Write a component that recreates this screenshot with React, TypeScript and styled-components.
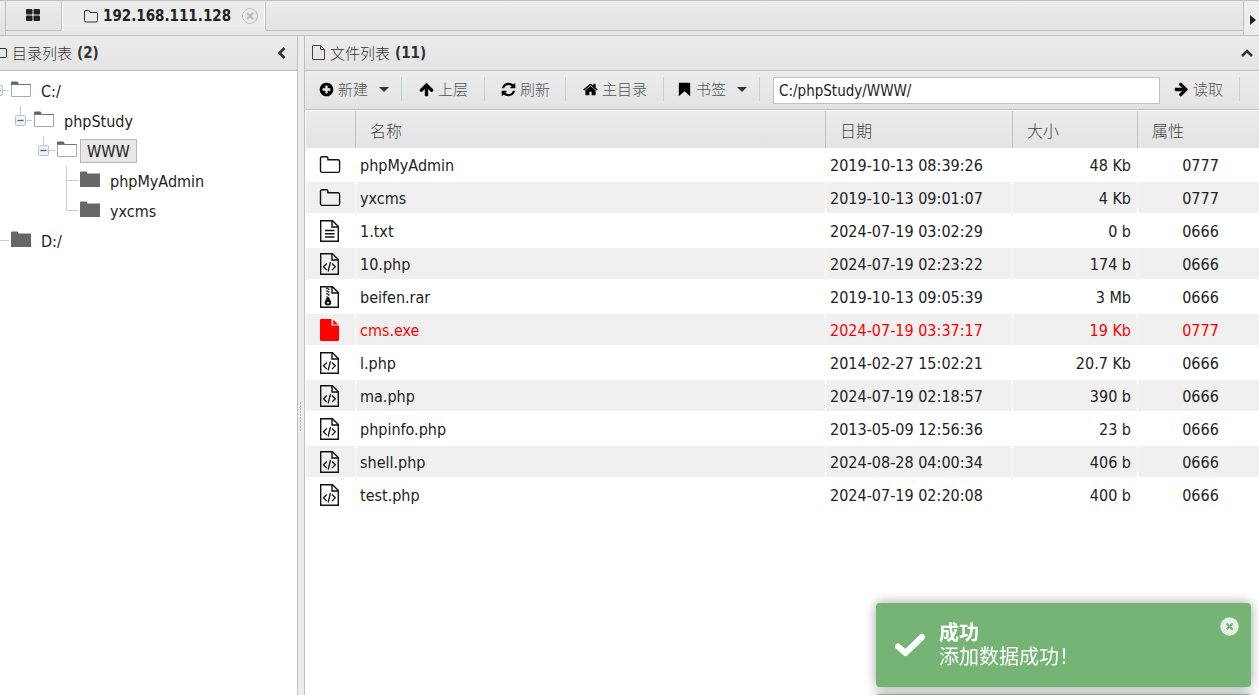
import React from 'react';
import styled, { createGlobalStyle } from 'styled-components';

const line = '#c0c0c0';
const bar = 'linear-gradient(#ececec, #e3e3e3)';
const latin = '"DejaVu Sans Condensed", "Noto Sans", "Noto Sans CJK SC", sans-serif';
const light = '"Noto Sans CJK SC", "Noto Sans", sans-serif';

const GlobalStyle = createGlobalStyle`
  *, *::before, *::after { box-sizing: border-box; }
  html, body, #root { height: 100%; }
  body { margin: 0; overflow: hidden; background: #fff; color: #222; font: 16px/24px ${latin}; }
  button, input { font: inherit; color: inherit; }
  button { margin: 0; padding: 0; border: 0; background: none; cursor: pointer; }
  svg { display: block; flex: none; }
`;

const Page = styled.div`
  display: flex;
  flex-direction: column;
  height: 100%;
`;

const TabBar = styled.nav`
  display: flex;
  flex: none;
  height: 36px;
  border-top: 1px solid ${line};
  border-bottom: 1px solid ${line};
  background: #e8e8e8;
`;

const TabEdge = styled.div`
  width: 6px;
  border-right: 1px solid ${line};
  background: ${bar};
`;

const HomeTab = styled.button`
  display: flex;
  align-items: center;
  justify-content: center;
  width: 56px;
  height: 30px;
  padding: 0 2px 2px 0;
  border-right: 1px solid ${line};
  border-bottom: 1px solid ${line};
  background: ${bar};
`;

const ActiveTab = styled.div`
  display: flex;
  align-items: center;
  height: 30px;
  width: 203px;
  padding-left: 20px;
  border-left: 1px solid #fff;
  border-right: 1px solid #fff;
  background: #ebebeb;
`;

const TabLabel = styled.button`
  display: flex;
  align-items: center;
  gap: 5px;
  font-size: 15px;
  font-weight: 700;
`;

const TabClose = styled.button`
  margin-left: 11px;
`;

const TabFill = styled.div`
  flex: 1;
  height: 30px;
  border-left: 1px solid ${line};
  border-bottom: 1px solid ${line};
  background: ${bar};
`;

const TabScroll = styled.button`
  display: flex;
  align-items: center;
  justify-content: flex-end;
  width: 16px;
  padding: 3px 3px 0 0;
  border-left: 1px solid ${line};
  background: #ededed;
`;

const Main = styled.div`
  display: flex;
  flex: 1;
  min-height: 0;
`;

const Side = styled.aside`
  flex: none;
  width: 298px;
  overflow: hidden;
  border-right: 1px solid ${line};
`;

const Splitter = styled.div`
  display: flex;
  align-items: center;
  justify-content: center;
  flex: none;
  width: 6px;
  padding-top: 102px;
  background: #ebebeb;
`;

const Content = styled.main`
  flex: 1;
  min-width: 0;
  border-left: 1px solid ${line};
`;

const PanelHead = styled.header<{ $left: number; $right: number }>`
  display: flex;
  align-items: center;
  justify-content: space-between;
  height: 35px;
  padding: 0 ${p => p.$right}px 0 ${p => p.$left}px;
  border-bottom: 1px solid ${line};
  background: ${bar};
`;

const PanelTitle = styled.h2`
  display: flex;
  align-items: center;
  gap: 5px;
  margin: 0;
  padding-bottom: 1px;
  font: 300 15px/24px ${light};
  color: #333;

  b { font: 700 15px/24px ${latin}; }
`;

const Tree = styled.ul`
  margin: 0 0 0 -14px;
  padding: 5px 0 0;
  list-style: none;

  ul { margin: 0; padding: 0 0 0 23px; list-style: none; }
`;

const TreeRow = styled.div`
  display: flex;
  align-items: center;
  height: 30px;
`;

const TreeName = styled.button<{ $selected?: boolean }>`
  height: 24px;
  margin-left: 1px;
  padding: 2px 6px 0;
  border: 1px solid ${p => (p.$selected ? '#b8b8b8' : 'transparent')};
  background: ${p => (p.$selected ? '#e7e7e7' : 'transparent')};
  line-height: 20px;
`;

const Toolbar = styled.div`
  display: flex;
  align-items: center;
  height: 39px;
  padding: 0 0 2px 14px;
  border-bottom: 1px solid ${line};
  background: ${bar};
`;

const Tool = styled.button`
  display: flex;
  align-items: center;
  gap: 4px;
  height: 30px;
  font: 300 15px/24px ${light};
  color: #555;
`;

const Caret = styled.span`
  margin-left: 7px;
  border: 5px solid transparent;
  border-top-color: #333;
  border-bottom-width: 0;
`;

const Divider = styled.span<{ $before: number; $after: number }>`
  width: 1px;
  height: 24px;
  margin: 0 ${p => p.$after}px 0 ${p => p.$before}px;
  background: #c5d0d6;
`;

const PathBox = styled.input`
  flex: 1;
  min-width: 0;
  height: 27px;
  margin: 3px 14px 0 0;
  padding: 0 5px;
  border: 1px solid ${line};
  background: #fff;
  font-size: 15px;
`;

const Files = styled.table`
  width: 100%;
  margin-top: 1px;
  padding-left: 1px;
  table-layout: fixed;
  border-collapse: separate;
  border-spacing: 0;
`;

const HeadCell = styled.th<{ $width?: number }>`
  width: ${p => (p.$width ? `${p.$width}px` : 'auto')};
  height: 37px;
  padding: 0 14px;
  border-right: 1px solid ${line};
  background: ${bar};
  font: 300 16px/24px ${light};
  color: #444;
  text-align: left;

  &:last-child { border-right: 0; }
`;

const FileRow = styled.tr<{ $alert?: boolean }>`
  color: ${p => (p.$alert ? '#f00' : 'inherit')};

  &:nth-child(even) td { background-color: #f0f0f0; }
`;

const Cell = styled.td<{ $align?: string }>`
  height: 33px;
  padding: 2px 5px 0 4px;
  border-right: 1px solid #fff;
  border-bottom: 1px solid #fff;
  border-top: 1px solid #fff;
  text-align: ${p => p.$align || 'left'};
  white-space: nowrap;

  &:last-child { border-right: 0; }
`;

const IconCell = styled(Cell)`
  padding: 0 0 0 12px;
`;

const SizeCell = styled(Cell)`
  padding-right: 6px;
`;

const ModeCell = styled(Cell)`
  padding-right: 0;
`;

const Toasts = styled.div`
  position: fixed;
  right: 8px;
  bottom: -83px;
  display: flex;
  flex-direction: column;
  gap: 7px;
  width: 375px;
`;

const Toast = styled.section`
  display: flex;
  align-items: center;
  height: 84px;
  padding: 0 12px 0 18px;
  border-radius: 4px;
  background: #75b475;
  box-shadow: 0 0 12px #a0a0a0;
  color: #fff;
`;

const ToastText = styled.div`
  flex: 1;
  margin-left: 13px;
  font: 400 20px/24px ${latin};

  strong { display: block; }
`;

const ToastClose = styled.button`
  align-self: flex-start;
  margin-top: 14px;
`;

const glyphs = {
  plus: 'M1344 960v-128q0-26-19-45t-45-19h-256v-256q0-26-19-45t-45-19h-128q-26 0-45 19t-19 45v256h-256q-26 0-45 19t-19 45v128q0 26 19 45t45 19h256v256q0 26 19 45t45 19h128q26 0 45-19t19-45v-256h256q26 0 45-19t19-45zm320-64q0 209-103 385.5t-279.5 279.5-385.5 103-385.5-103-279.5-279.5-103-385.5 103-385.5 279.5-279.5 385.5-103 385.5 103 279.5 279.5 103 385.5z',
  arrow: 'M1675 971q0 51-37 90l-75 75q-38 38-91 38-54 0-90-38l-294-293v704q0 52-37.5 84.5t-90.5 32.5h-128q-53 0-90.5-32.5t-37.5-84.5v-704l-294 293q-36 38-90 38t-90-38l-75-75q-38-38-38-90 0-53 38-91l651-651q35-37 90-37 54 0 91 37l651 651q37 39 37 91z',
  refresh: 'M1639 1056q0 5-1 7-64 268-268 434.5t-478 166.5q-146 0-282.5-55t-243.5-157l-129 129q-19 19-45 19t-45-19-19-45v-448q0-26 19-45t45-19h448q26 0 45 19t19 45-19 45l-137 137q71 66 161 102t187 36q134 0 250-65t186-179q11-17 53-117 8-23 30-23h192q13 0 22.5 9.5t9.5 22.5zm25-800v448q0 26-19 45t-45 19h-448q-26 0-45-19t-19-45 19-45l138-138q-148-137-349-137-134 0-250 65t-186 179q-11 17-53 117-8 23-30 23h-199q-13 0-22.5-9.5t-9.5-22.5v-7q65-268 270-434.5t480-166.5q146 0 284 55.5t245 156.5l130-129q19-19 45-19t45 19 19 45z',
  home: 'M1472 992v480q0 26-19 45t-45 19h-384v-384h-256v384h-384q-26 0-45-19t-19-45v-480q0-1 .5-3t.5-3l575-474 575 474q1 2 1 6zm223-69l-62 74q-8 9-21 11h-3q-13 0-21-7l-692-577-692 577q-12 8-24 7-13-2-21-11l-62-74q-8-10-7-23.5t11-21.5l719-599q32-26 76-26t76 26l244 204v-195q0-14 9-23t23-9h192q14 0 23 9t9 23v408l219 182q10 8 11 21.5t-7 23.5z',
  bookmark: 'M1536 128v1536l-640-560-640 560v-1536z',
};

const Glyph = ({ name, turn = 0 }: { name: keyof typeof glyphs; turn?: number }) => (
  <svg width="15" height="15" viewBox="50 50 1692 1692" fill="#000" aria-hidden="true">
    <path d={glyphs[name]} transform={`rotate(${turn} 896 896)`} />
  </svg>
);

const SmallFolder = () => (
  <svg width="15" height="13" viewBox="0 0 15 13" fill="none" stroke="#333" aria-hidden="true">
    <path d="M1.500 2q0-1.500 1.500-1.500h2.500q1.500 0 1.500 1.500v.5h6q1.500 0 1.500 1.500v6.500q0 1.500-1.500 1.500H3q-1.500 0-1.500-1.500z" />
  </svg>
);

type Kind = 'folder' | 'text' | 'code' | 'zip' | 'file';

const FileIcon = ({ kind }: { kind: Kind }) => {
  if (kind === 'folder') {
    return (
      <svg width="24" height="24" viewBox="0 0 24 24" fill="none" stroke="#111" strokeWidth="1.400" aria-hidden="true">
        <path d="M2.500 5.500q0-1.700 1.700-1.700h4.200q1.500 0 1.500 1.500v1.500h10q1.700 0 1.700 1.700v9.300q0 1.600-1.700 1.600H4.200q-1.700 0-1.700-1.700z" />
      </svg>
    );
  }
  if (kind === 'file') {
    return (
      <svg width="24" height="24" viewBox="0 0 24 24" fill="#f00" aria-hidden="true">
        <path d="M3 1h10.500v6.500h7.500v14.500q0 1-1 1H3q-1 0-1-1V2q0-1 1-1zM15.200 1.500l5 5h-5z" />
      </svg>
    );
  }
  return (
    <svg width="24" height="24" viewBox="0 0 24 24" fill="none" stroke="#111" strokeWidth="1.400" aria-hidden="true">
      <path d="M3 1.700h11.500l5.800 5.800v14.800H2.700V1.700zM14 2v6h6.200" />
      {kind === 'text' && <path d="M7 11.500h9.500M7 14.700h9.500M7 18h9.500" />}
      {kind === 'code' && <path d="M8.800 11.500l-3.300 3.300 3.300 3.300M14 11.500l3.300 3.300-3.300 3.300M12.500 10l-2.400 9.500" strokeWidth="1.300" />}
      {kind === 'zip' && (
        <>
          <path d="M9 2.500v9M10.700 3.500v8" strokeDasharray="1.500 1.300" strokeWidth="1.600" />
          <path d="M8.800 12h2.200l2.200 5q.6 3.400-3.300 3.400T6.700 17z" fill="#111" stroke="none" />
          <path d="M8.800 17.800h2.400" stroke="#fff" strokeWidth="1.300" />
        </>
      )}
    </svg>
  );
};

/* Guide lines left of a tree entry: "open" adds the collapse box. */
const Guide = ({ up, down, open }: { up?: boolean; down?: boolean; open?: boolean }) => (
  <svg width="23" height="30" viewBox="0 0 23 30" fill="none" stroke="#ccc" aria-hidden="true">
    <path d={`M11.500 14.500H23${up ? 'M11.500 0V14.500' : ''}${down ? 'M11.500 14.500V30' : ''}`} />
    {open && (
      <>
        <rect x="6.500" y="9.500" width="10" height="10" rx="1" fill="#edf3f7" stroke="#b4c3cc" />
        <path d="M8.500 14.500h6" stroke="#3d6b82" strokeWidth="1.300" />
      </>
    )}
  </svg>
);

const TreeFolder = ({ open }: { open?: boolean }) => (
  <svg width="24" height="30" viewBox="0 0 24 30" aria-hidden="true">
    {open ? (
      <>
        <path d="M2 12V6.500q0-1 1-1h5q1 0 1.500 2l1 1.500z" fill="#666" />
        <path d="M2.500 8.500h19v12h-19z" fill="#fff" stroke="#aaa" />
        <path d="M2 8.500h20" stroke="#777" />
      </>
    ) : (
      <path d="M2 6.500q0-1 1-1h5q1 0 1.500 2h12.500v13.500H2z" fill="#666" />
    )}
  </svg>
);

interface Node { name: string; selected?: boolean; last?: boolean; kids?: Node[] }

const tree: Node[] = [
  {
    name: 'C:/',
    kids: [{
      name: 'phpStudy',
      last: true,
      kids: [{
        name: 'WWW',
        selected: true,
        last: true,
        kids: [{ name: 'phpMyAdmin' }, { name: 'yxcms', last: true }],
      }],
    }],
  },
  { name: 'D:/', last: true },
];

const Branch = ({ node }: { node: Node }) => (
  <li>
    <TreeRow>
      <Guide up down={!node.last} open={!!node.kids} />
      <TreeFolder open={!!node.kids} />
      <TreeName type="button" $selected={node.selected}>{node.name}</TreeName>
    </TreeRow>
    {node.kids && <ul>{node.kids.map(k => <Branch key={k.name} node={k} />)}</ul>}
  </li>
);

const files: [Kind, string, string, string, string][] = [
  ['folder', 'phpMyAdmin', '2019-10-13 08:39:26', '48 Kb', '0777'],
  ['folder', 'yxcms', '2019-10-13 09:01:07', '4 Kb', '0777'],
  ['text', '1.txt', '2024-07-19 03:02:29', '0 b', '0666'],
  ['code', '10.php', '2024-07-19 02:23:22', '174 b', '0666'],
  ['zip', 'beifen.rar', '2019-10-13 09:05:39', '3 Mb', '0666'],
  ['file', 'cms.exe', '2024-07-19 03:37:17', '19 Kb', '0777'],
  ['code', 'l.php', '2014-02-27 15:02:21', '20.7 Kb', '0666'],
  ['code', 'ma.php', '2024-07-19 02:18:57', '390 b', '0666'],
  ['code', 'phpinfo.php', '2013-05-09 12:56:36', '23 b', '0666'],
  ['code', 'shell.php', '2024-08-28 04:00:34', '406 b', '0666'],
  ['code', 'test.php', '2024-07-19 02:20:08', '400 b', '0666'],
];

export default function App() {
  return (
    <Page>
      <GlobalStyle />
      <TabBar>
        <TabEdge />
        <HomeTab type="button" aria-label="Home">
          <svg width="14" height="12" viewBox="0 0 14 12" fill="#222">
            <rect width="6.500" height="5.500" rx="1" /><rect x="7.500" width="6.500" height="5.500" rx="1" />
            <rect y="6.500" width="6.500" height="5.500" rx="1" /><rect x="7.500" y="6.500" width="6.500" height="5.500" rx="1" />
          </svg>
        </HomeTab>
        <ActiveTab>
          <TabLabel type="button"><SmallFolder />192.168.111.128</TabLabel>
          <TabClose type="button" aria-label="Close tab">
            <svg width="16" height="16" viewBox="0 0 16 16" fill="none" stroke="#bdbdbd">
              <circle cx="8" cy="8" r="7.400" />
              <path d="M5 5l6 6M11 5l-6 6" strokeWidth="2.400" />
            </svg>
          </TabClose>
        </ActiveTab>
        <TabFill />
        <TabScroll type="button" aria-label="Next tabs">
          <svg width="6" height="10" viewBox="0 0 6 10" fill="#222"><path d="M0 0l6 5-6 5z" /></svg>
        </TabScroll>
      </TabBar>
      <Main>
        <Side>
          <PanelHead $left={0} $right={10}>
            <PanelTitle>
              <svg width="7" height="12" viewBox="8 0 7 12" fill="none" stroke="#333" aria-hidden="true">
                <path d="M0 1.500h13q1.500 0 1.500 1.500v6q0 1.500-1.500 1.500H0" />
              </svg>
              目录列表 <b>(2)</b>
            </PanelTitle>
            <button type="button" aria-label="Collapse panel">
              <svg width="10" height="12" viewBox="0 0 10 12" fill="none" stroke="#333" strokeWidth="2.600"><path d="M7.500 1L2.500 6l5 5" /></svg>
            </button>
          </PanelHead>
          <Tree>{tree.map(n => <Branch key={n.name} node={n} />)}</Tree>
        </Side>
        <Splitter>
          <svg width="2" height="30" viewBox="0 0 2 30" stroke="#b8b8b8" strokeDasharray="2 1" aria-hidden="true">
            <path d="M.5 0v30" />
          </svg>
        </Splitter>
        <Content>
          <PanelHead $left={7} $right={6}>
            <PanelTitle>
              <svg width="13" height="15" viewBox="0 0 13 15" fill="none" stroke="#444" aria-hidden="true">
                <path d="M.5.5h8l4 4v10H.500zM8.500.5v4h4" />
              </svg>
              文件列表 <b>(11)</b>
            </PanelTitle>
            <button type="button" aria-label="Collapse panel">
              <svg width="12" height="8" viewBox="0 0 12 8" fill="none" stroke="#333" strokeWidth="2.600"><path d="M1 7l5-5 5 5" /></svg>
            </button>
          </PanelHead>
          <Toolbar>
            <Tool type="button"><Glyph name="plus" />新建<Caret /></Tool>
            <Divider $before={12} $after={17} />
            <Tool type="button"><Glyph name="arrow" />上层</Tool>
            <Divider $before={16} $after={16} />
            <Tool type="button"><Glyph name="refresh" />刷新</Tool>
            <Divider $before={15} $after={17} />
            <Tool type="button"><Glyph name="home" />主目录</Tool>
            <Divider $before={16} $after={13} />
            <Tool type="button"><Glyph name="bookmark" />书签<Caret /></Tool>
            <Divider $before={12} $after={13} />
            <PathBox aria-label="Path" defaultValue="C:/phpStudy/WWW/" />
            <Tool type="button"><Glyph name="arrow" turn={90} />读取</Tool>
            <Divider $before={16} $after={19} />
          </Toolbar>
          <Files>
            <thead>
              <tr>
                <HeadCell $width={50} aria-label="Type" />
                <HeadCell>名称</HeadCell>
                <HeadCell $width={187}>日期</HeadCell>
                <HeadCell $width={125}>大小</HeadCell>
                <HeadCell $width={121}>属性</HeadCell>
              </tr>
            </thead>
            <tbody>
              {files.map(([kind, name, date, size, mode]) => (
                <FileRow key={name} $alert={kind === 'file'}>
                  <IconCell><FileIcon kind={kind} /></IconCell>
                  <Cell>{name}</Cell>
                  <Cell>{date}</Cell>
                  <SizeCell $align="right">{size}</SizeCell>
                  <ModeCell $align="center">{mode}</ModeCell>
                </FileRow>
              ))}
            </tbody>
          </Files>
        </Content>
      </Main>
      <Toasts>
        <Toast role="status">
          <svg width="32" height="26" viewBox="0 0 32 26" fill="none" stroke="#fff" strokeWidth="6" strokeLinecap="round" strokeLinejoin="round">
            <path d="M4 14.500l7.500 6.500L28 5" />
          </svg>
          <ToastText><strong>成功</strong>添加数据成功！</ToastText>
          <ToastClose type="button" aria-label="Dismiss">
            <svg width="19" height="19" viewBox="0 0 19 19">
              <circle cx="9.500" cy="9.500" r="9.200" fill="#e3f0e3" />
              <path d="M6.500 6.500l6 6M12.500 6.500l-6 6" stroke="#75b475" strokeWidth="2" />
            </svg>
          </ToastClose>
        </Toast>
        <Toast />
      </Toasts>
    </Page>
  );
}
